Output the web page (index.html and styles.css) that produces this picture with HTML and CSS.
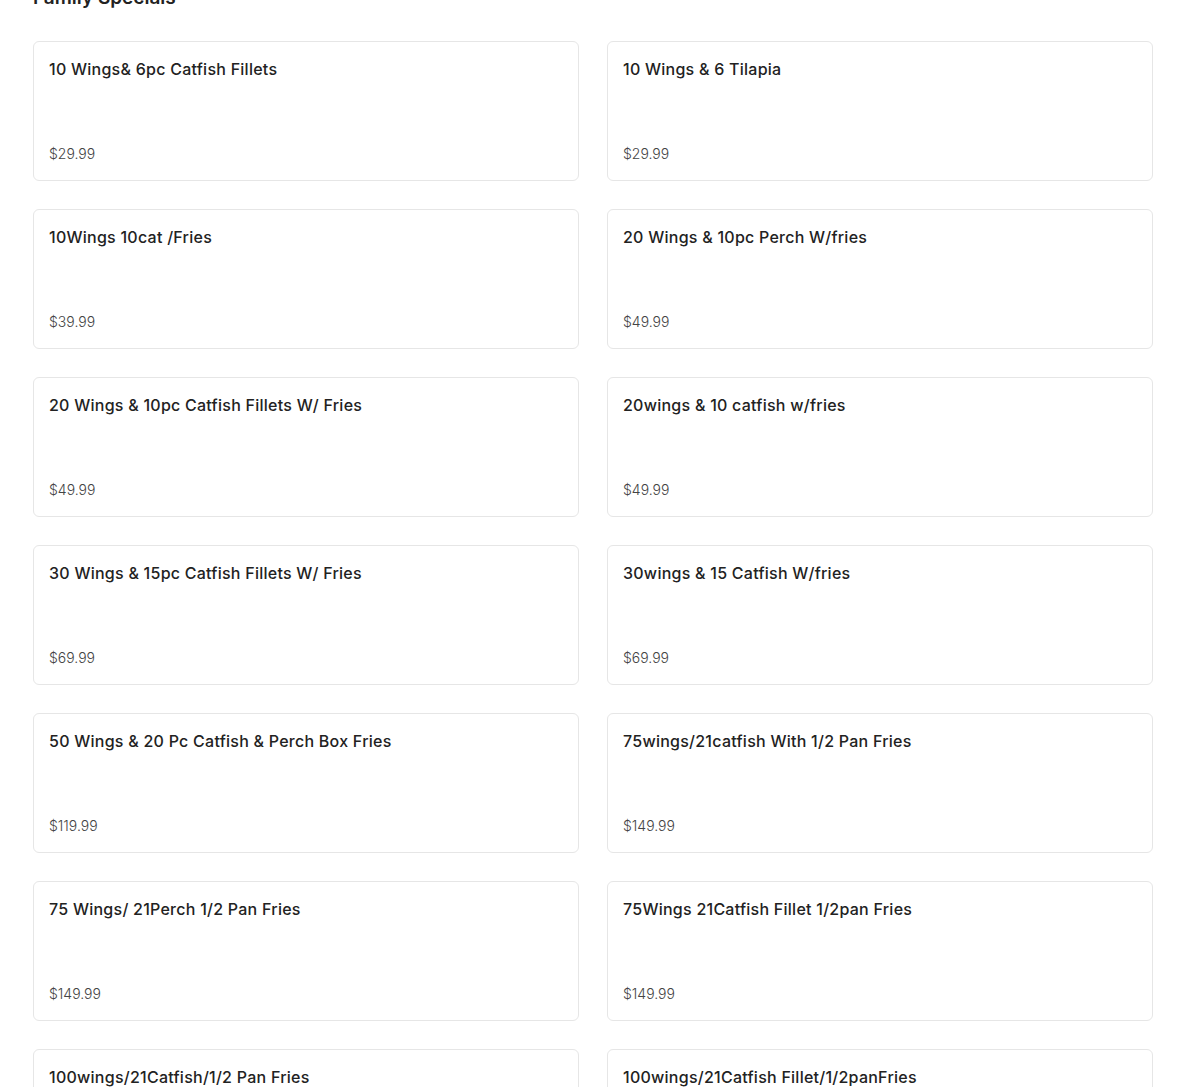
FILE: index.html
```html
<!DOCTYPE html>
<html lang="en">
<head>
<meta charset="utf-8">
<title>Family Specials</title>
<link rel="stylesheet" href="styles.css">
</head>
<body>
<main class="menu">
  <h2 class="section-title">Family Specials</h2>
  <div class="grid">
    <div class="card"><div class="name">10 Wings&amp; 6pc Catfish Fillets</div><div class="price">$29.99</div></div>
    <div class="card"><div class="name">10 Wings &amp; 6 Tilapia</div><div class="price">$29.99</div></div>
    <div class="card"><div class="name">10Wings 10cat /Fries</div><div class="price">$39.99</div></div>
    <div class="card"><div class="name">20 Wings &amp; 10pc Perch W/fries</div><div class="price">$49.99</div></div>
    <div class="card"><div class="name">20 Wings &amp; 10pc Catfish Fillets W/ Fries</div><div class="price">$49.99</div></div>
    <div class="card"><div class="name">20wings &amp; 10 catfish w/fries</div><div class="price">$49.99</div></div>
    <div class="card"><div class="name">30 Wings &amp; 15pc Catfish Fillets W/ Fries</div><div class="price">$69.99</div></div>
    <div class="card"><div class="name">30wings &amp; 15 Catfish W/fries</div><div class="price">$69.99</div></div>
    <div class="card"><div class="name">50 Wings &amp; 20 Pc Catfish &amp; Perch Box Fries</div><div class="price">$119.99</div></div>
    <div class="card"><div class="name">75wings/21catfish With 1/2 Pan Fries</div><div class="price">$149.99</div></div>
    <div class="card"><div class="name">75 Wings/ 21Perch 1/2 Pan Fries</div><div class="price">$149.99</div></div>
    <div class="card"><div class="name">75Wings 21Catfish Fillet 1/2pan Fries</div><div class="price">$149.99</div></div>
    <div class="card"><div class="name">100wings/21Catfish/1/2 Pan Fries</div><div class="price">$149.99</div></div>
    <div class="card"><div class="name">100wings/21Catfish Fillet/1/2panFries</div><div class="price">$149.99</div></div>
  </div>
</main>
</body>
</html>
```
FILE: styles.css
```css
html, body {
  margin: 0;
  padding: 0;
  background: #ffffff;
}
body {
  font-family: Inter, "Open Sans", "Liberation Sans", sans-serif;
  color: #222;
  overflow: hidden;
}
.menu {
  padding: 0 32px 40px 33px;
}
.section-title {
  margin: -16px 0 29px 0;
  font-size: 19px;
  line-height: 28px;
  font-weight: 600;
  color: #222;
}
.grid {
  display: grid;
  grid-template-columns: 1fr 1fr;
  column-gap: 28px;
  row-gap: 28px;
}
.card {
  box-sizing: border-box;
  height: 140px;
  border: 1px solid #e6e6e6;
  border-radius: 6px;
  padding: 15px 15px 16px 15px;
  display: flex;
  flex-direction: column;
  justify-content: space-between;
}
.name {
  font-size: 16px;
  line-height: 24px;
  font-weight: 500;
  letter-spacing: 0.25px;
  color: #222;
}
.price {
  font-size: 14px;
  line-height: 20px;
  font-weight: 300;
  color: #444;
}
```
